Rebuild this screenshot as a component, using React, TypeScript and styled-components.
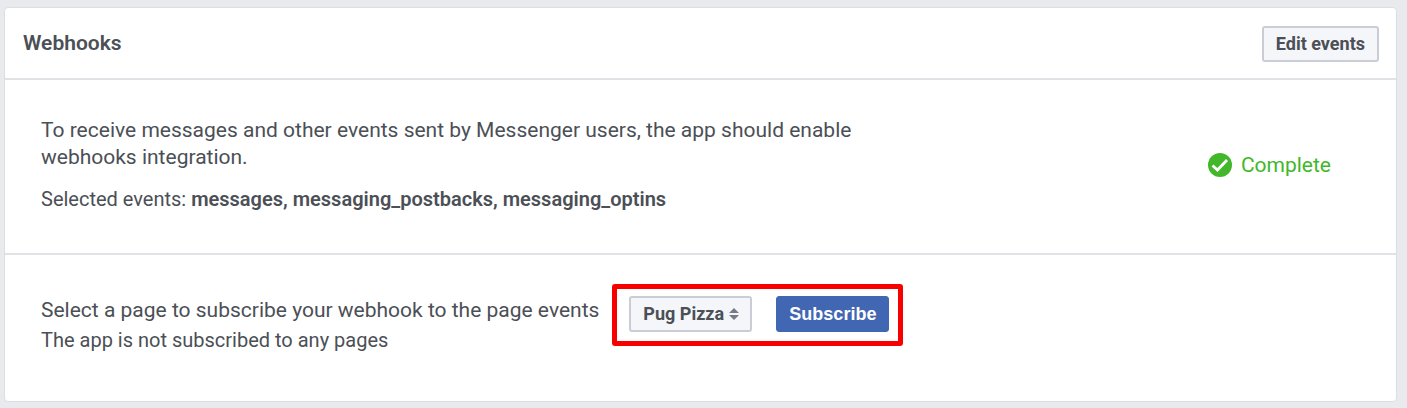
import React from 'react';
import styled, { createGlobalStyle } from 'styled-components';

const Global = createGlobalStyle`
  * { box-sizing: border-box; }
  body { margin: 0; background: #e9eaee; color: #4b4f56; font-family: Roboto, "Liberation Sans", sans-serif; font-size: 21px; line-height: 27px; }
`;
const Page = styled.main`
  padding: 7px 10px 6px 4px;
`;
const Card = styled.section`
  background: #fff;
  border: 1px solid #dcdee3;
  border-radius: 4px;
`;
const Header = styled.header`
  display: flex;
  align-items: center;
  justify-content: space-between;
  padding: 18px 17px 16px 18px;
  border-bottom: 2px solid #e1e2e6;
`;
const Title = styled.h2`
  margin: 0;
  padding-bottom: 2px;
  font-size: 21px;
  line-height: 24px;
  font-weight: 600;
`;
const Button = styled.button<{ $primary?: boolean }>`
  height: 36px;
  padding: 0 12px;
  border-radius: 3px;
  font: 700 18px/24px ${p => (p.$primary ? '"Liberation Sans", Arial' : 'Roboto, "Liberation Sans"')}, sans-serif;
  border: ${p => (p.$primary ? '1px solid #4267b2' : '2px solid #cacdd6')};
  background: ${p => (p.$primary ? '#4267b2' : '#f5f6f9')};
  color: ${p => (p.$primary ? '#fff' : '#4b4f56')};
`;
const Row = styled.div`
  display: flex;
  justify-content: space-between;
  align-items: center;
  padding: 37px 65px 40px 36px;
  border-bottom: 2px solid #e1e2e6;
`;
const Info = styled.div`
  max-width: 840px;
`;
const Text = styled.p`
  margin: 0;
`;
const SmallText = styled.p`
  margin: 0;
  font-size: 20px;
`;
const Events = styled(SmallText)`
  margin-top: 15px;
  b { font-weight: 600; }
`;
const Status = styled.div`
  display: flex;
  align-items: center;
  gap: 9px;
  color: #42b72a;
`;
const Footer = styled.div`
  display: flex;
  align-items: flex-start;
  gap: 13px;
  padding: 29px 36px 47px;
`;
const Labels = styled.div`
  padding-top: 13px;
  display: grid;
  gap: 3px;
`;
const Highlight = styled.div`
  display: flex;
  gap: 24px;
  padding: 7px 9px 9px 12px;
  border: 5px solid #f80000;
  border-radius: 3px;
`;
const Picker = styled.div`
  display: grid;
  align-items: center;
  > * { grid-area: 1 / 1; }
  svg { justify-self: end; margin-right: 13px; pointer-events: none; }
`;
const Select = styled.select`
  appearance: none;
  height: 36px;
  padding: 0 26px 0 12px;
  border: 2px solid #cacdd6;
  border-radius: 3px;
  background: #f5f6f9;
  color: #4b4f56;
  font: 700 18px/24px Roboto, "Liberation Sans", sans-serif;
`;

export default function App() {
  return (
    <Page>
      <Global />
      <Card>
        <Header>
          <Title>Webhooks</Title>
          <Button type="button">Edit events</Button>
        </Header>
        <Row>
          <Info>
            <Text>To receive messages and other events sent by Messenger users, the app should enable webhooks integration.</Text>
            <Events>Selected events: <b>messages, messaging_postbacks, messaging_optins</b></Events>
          </Info>
          <Status>
            <svg width="24" height="24" viewBox="0 0 24 24" aria-hidden="true">
              <circle cx="12" cy="12" r="12" fill="#42b72a" />
              <path d="M4.500 12.500l5 4.500 9.500-10" fill="none" stroke="#fff" strokeWidth="2.8" />
            </svg>
            Complete
          </Status>
        </Row>
        <Footer>
          <Labels>
            <label htmlFor="page">Select a page to subscribe your webhook to the page events</label>
            <SmallText>The app is not subscribed to any pages</SmallText>
          </Labels>
          <Highlight>
            <Picker>
              <Select id="page"><option>Pug Pizza</option></Select>
              <svg width="10" height="12" viewBox="0 0 10 12" aria-hidden="true">
                <path d="M5 0l5 5H0zM5 12l5-5H0z" fill="#777b86" />
              </svg>
            </Picker>
            <Button type="button" $primary>Subscribe</Button>
          </Highlight>
        </Footer>
      </Card>
    </Page>
  );
}
